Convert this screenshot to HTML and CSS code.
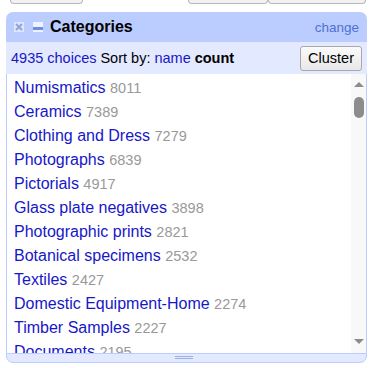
FILE: index.html
```html
<!DOCTYPE html>
<html>
<head>
<meta charset="utf-8">
<link rel="stylesheet" href="styles.css">
</head>
<body>
<div class="topbar">
  <span class="tb tb1"></span>
  <span class="tb-gap"></span>
  <span class="tb tb2"></span>
  <span class="tb tb3"></span>
</div>
<div class="facet">
  <div class="facet-title">
    <span class="ico">
      <svg width="10" height="10" viewBox="0 0 10 10"><rect width="10" height="10" fill="#dfe6fb"/><path d="M2 2L8 8M8 2L2 8" stroke="#8fa6d8" stroke-width="2"/></svg>
    </span>
    <span class="ico">
      <svg width="10" height="10" viewBox="0 0 10 10"><rect width="10" height="10" fill="#eef2fd"/><rect x="0" y="5" width="10" height="3" fill="#6f8fd8"/></svg>
    </span>
    <span class="title">Categories</span>
    <a class="change">change</a>
  </div>
  <div class="facet-controls">
    <span class="choices">4935 choices</span>
    <span>Sort by:</span>
    <a class="sort">name</a>
    <b>count</b>
    <button class="cluster">Cluster</button>
  </div>
  <div class="facet-body">
    <ul class="choice-list">
      <li><a>Numismatics</a> <span class="cnt">8011</span></li>
      <li><a>Ceramics</a> <span class="cnt">7389</span></li>
      <li><a>Clothing and Dress</a> <span class="cnt">7279</span></li>
      <li><a>Photographs</a> <span class="cnt">6839</span></li>
      <li><a>Pictorials</a> <span class="cnt">4917</span></li>
      <li><a>Glass plate negatives</a> <span class="cnt">3898</span></li>
      <li><a>Photographic prints</a> <span class="cnt">2821</span></li>
      <li><a>Botanical specimens</a> <span class="cnt">2532</span></li>
      <li><a>Textiles</a> <span class="cnt">2427</span></li>
      <li><a>Domestic Equipment-Home</a> <span class="cnt">2274</span></li>
      <li><a>Timber Samples</a> <span class="cnt">2227</span></li>
      <li><a>Documents</a> <span class="cnt">2195</span></li>
    </ul>
    <div class="scrollbar">
      <span class="arrow up"></span>
      <span class="thumb"></span>
      <span class="spacer"></span>
      <span class="arrow down"></span>
    </div>
  </div>
  <div class="facet-resize"><span class="grip"></span></div>
</div>
</body>
</html>
```

FILE: styles.css
```css
html, body {
  margin: 0;
  padding: 0;
  background: #fff;
}
body {
  font-family: "Liberation Sans", Arial, sans-serif;
  width: 370px;
  height: 368px;
  overflow: hidden;
}
.topbar {
  display: flex;
  height: 4px;
  margin-bottom: 8px;
  padding-left: 10px;
}
.tb {
  height: 3px;
  border: 1px solid #b8b8b8;
  border-top: none;
  border-radius: 0 0 4px 4px;
  background: #f2f2f2;
}
.tb1 { width: 71px; }
.tb-gap { width: 105px; }
.tb2 { width: 78px; }
.tb3 { width: 96px; }
.facet {
  margin-left: 6px;
  width: 361px;
}
.facet-title {
  display: flex;
  align-items: center;
  height: 30px;
  background: #bbccff;
  border-radius: 7px 7px 0 0;
  padding: 0 8px 0 8px;
}
.ico {
  display: flex;
  width: 10px;
  height: 10px;
  margin-right: 9px;
}
.title {
  font-weight: bold;
  font-size: 16px;
  color: #000;
  margin-left: -2px;
}
.change {
  margin-left: auto;
  font-size: 13.5px;
  color: #4e72d4;
  margin-top: 1px;
}
.facet-controls {
  display: flex;
  align-items: center;
  height: 32px;
  background: #e3e9ff;
  padding: 0 5px 0 5px;
  font-size: 14.5px;
  color: #000;
  white-space: pre;
}
.facet-controls > * { margin-right: 4px; }
.choices { color: #1717c7; }
.sort { color: #1717c7; }
.cluster {
  margin-left: auto;
  margin-right: 0;
  height: 25px;
  width: 62px;
  padding: 0;
  font-family: "Liberation Sans", Arial, sans-serif;
  font-size: 14.5px;
  color: #000;
  background: linear-gradient(#fafafa, #e8e8e8);
  border: 1px solid #a9a9a9;
  border-radius: 3px;
}
.facet-body {
  display: flex;
  height: 279px;
  border-left: 1px solid #bbccff;
  border-right: 1px solid #bbccff;
  background: #fff;
  overflow: hidden;
}
.choice-list {
  flex: 1;
  list-style: none;
  margin: 0;
  padding: 2px 0 0 7px;
  overflow: hidden;
}
.choice-list li {
  height: 24px;
  line-height: 24px;
  font-size: 16px;
  white-space: nowrap;
}
.choice-list a { color: #1717c7; }
.cnt {
  color: #999;
  font-size: 14.5px;
}
.scrollbar {
  width: 15px;
  display: flex;
  flex-direction: column;
  align-items: center;
  background: #f8f8f8;
}
.arrow {
  width: 0;
  height: 0;
  border-left: 5px solid transparent;
  border-right: 5px solid transparent;
}
.arrow.up {
  margin-top: 8px;
  border-bottom: 5px solid #8c8c8c;
}
.arrow.down {
  margin-bottom: 9px;
  border-top: 5px solid #8c8c8c;
}
.thumb {
  margin-top: 10px;
  width: 10px;
  height: 21px;
  border-radius: 5px;
  background: #8c8c8c;
}
.spacer { flex: 1; }
.facet-resize {
  display: flex;
  justify-content: center;
  height: 8px;
  background: #e3e9ff;
  border: 1px solid #bbccff;
  border-radius: 0 0 7px 7px;
}
.grip {
  width: 18px;
  height: 1px;
  margin-top: 2px;
  margin-left: -6px;
  border-top: 1px solid #9ab1e8;
  border-bottom: 1px solid #9ab1e8;
}
```
